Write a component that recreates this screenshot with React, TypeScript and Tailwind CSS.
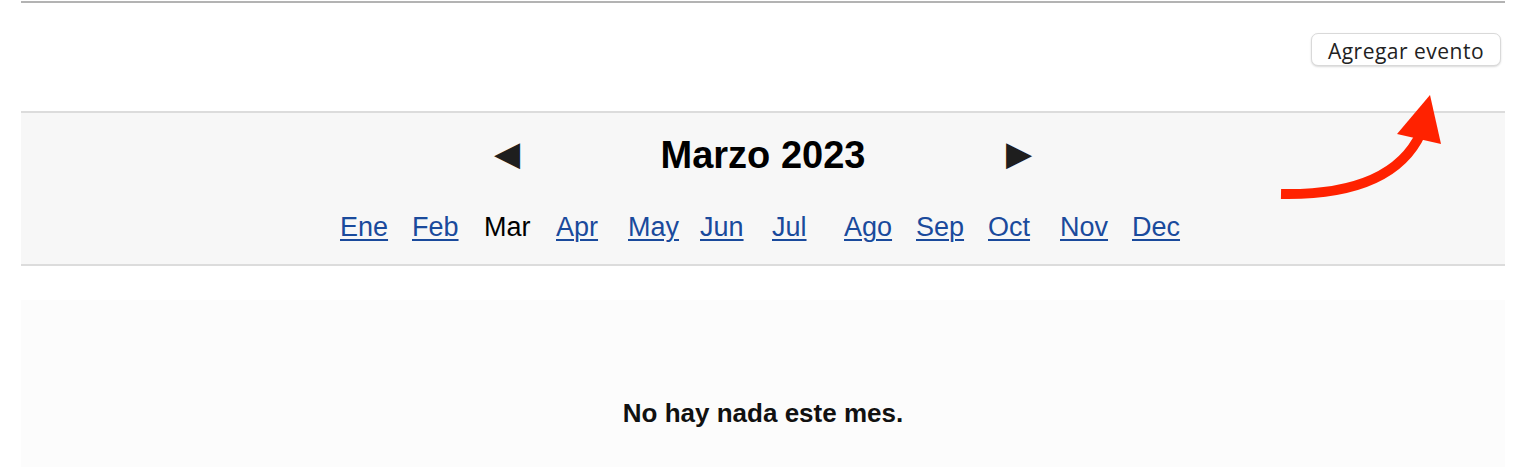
const meses = ['Ene', 'Feb', 'Mar', 'Apr', 'May', 'Jun', 'Jul', 'Ago', 'Sep', 'Oct', 'Nov', 'Dec']

function FlechaRoja() {
  // annotation arrow pointing at the button
  return (
    <svg className="pointer-events-none absolute left-0 top-0" width="1528" height="467">
      <path d="M1281 193 Q1392 195 1421 132" fill="none" stroke="#ff2200" strokeWidth="10" />
      <polygon points="1430,94 1397,133 1441,143" fill="#ff2200" />
    </svg>
  )
}

export default function App() {
  const actual = 'Mar'
  return (
    <div className="relative min-h-[467px] bg-white" style={{ fontFamily: '"Liberation Sans", Arial, sans-serif' }}>
      <div className="ml-[21px] w-[1484px]">
        <div className="mt-[1px] h-[2px] bg-[#b3b3b3]" />
        <div className="flex justify-end pt-[30px] pb-[45px] pr-[4px]">
          <button
            className="h-[33px] w-[190px] rounded-[7px] border border-[#d9d9d9] bg-white pt-[3px] text-[21px] leading-none tracking-[0.5px] text-[#222] shadow-[0_1px_2px_rgba(0,0,0,0.15)]"
            style={{ fontFamily: '"Open Sans", Inter, sans-serif' }}
          >
            Agregar evento
          </button>
        </div>
        <div className="border-y-2 border-[#dcdcdc] bg-[#f7f7f7] pt-[19px] pb-[21px]">
          <div className="flex items-center justify-center">
            <span className="mb-[5px] text-[34px] leading-none text-[#1e1e1e]">◀</span>
            <h1 className="w-[486px] text-center text-[38px] font-bold leading-[46px] text-black">Marzo 2023</h1>
            <span className="mb-[5px] text-[34px] leading-none text-[#1e1e1e]">▶</span>
          </div>
          <div className="mt-[33px] flex justify-center">
            {meses.map((m) => (
              <div key={m} className="w-[72px] pl-[9px] text-[27px] leading-[32px]">
                {m === actual ? (
                  <span className="text-black">{m}</span>
                ) : (
                  <a href="#" className="text-[#1a4a9c] underline decoration-[2px] underline-offset-[3px]">
                    {m}
                  </a>
                )}
              </div>
            ))}
          </div>
        </div>
        <div className="mt-[34px] flex h-[170px] items-center justify-center bg-[#fcfcfc] pt-[56px]">
          <p className="text-[26px] font-bold text-[#111]">No hay nada este mes.</p>
        </div>
      </div>
      <FlechaRoja />
    </div>
  )
}
